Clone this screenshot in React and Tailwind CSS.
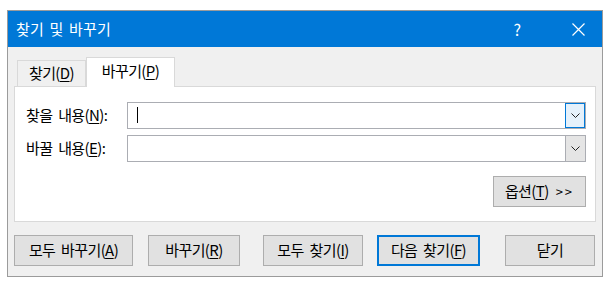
import React from "react";

const font = { fontFamily: '"Noto Sans CJK KR", "Noto Sans", sans-serif' };

// underlined mnemonic letter
const Key = ({ children }) => <span className="underline underline-offset-2">{children}</span>;

const Chevron = () => (
  <svg width="9" height="6" viewBox="0 0 9 6" fill="none">
    <path d="M0.5 0.5 L4.5 4.5 L8.5 0.5" stroke="#222" strokeWidth="1" />
  </svg>
);

const ComboInput = ({ focused, cursor }) => (
  <div className="flex h-[27px] flex-1 border border-[#abadb3] bg-white">
    <div className="relative flex-1">
      {cursor && <div className="absolute left-[9px] top-[4px] h-[16px] w-px bg-black" />}
    </div>
    <div
      className={
        focused
          ? "flex w-[20px] items-center justify-center border border-[#0078d7] bg-[#e5f1fb]"
          : "flex w-[20px] items-center justify-center border-l border-[#abadb3] bg-[#e5e5e5]"
      }
    >
      <Chevron />
    </div>
  </div>
);

const Btn = ({ children, className = "", primary }) => (
  <button
    className={
      "flex h-[31px] items-center justify-center bg-[#e1e1e1] text-[15px] tracking-[-0.6px] [word-spacing:3px] text-black " +
      (primary ? "border-2 border-[#0078d7] " : "border border-[#adadad] ") +
      className
    }
  >
    {children}
  </button>
);

export default function App() {
  return (
    <div className="h-[281px] w-[609px] bg-white pl-[7px] pt-[10px]" style={font}>
      <div className="flex h-[267px] w-[596px] flex-col border border-[#9b9b9b] bg-[#f0f0f0]">
        {/* Title bar */}
        <div className="flex h-[36px] items-center bg-[#0078d7] pl-[8px] text-white">
          <span className="text-[15px] tracking-[0.2px] [word-spacing:2px]">찾기 및 바꾸기</span>
          <span className="ml-auto mr-[51px] text-[16px]">?</span>
          <svg className="mr-[17px]" width="13" height="13" viewBox="0 0 13 13">
            <path d="M0.5 0.5 L12.5 12.5 M12.5 0.5 L0.5 12.5" stroke="#fff" strokeWidth="1.2" />
          </svg>
        </div>

        <div className="flex flex-1 flex-col px-[6px]">
          {/* Tabs */}
          <div className="mt-[10px] flex items-end pl-[3px]">
            <div className="flex h-[26px] w-[69px] items-center justify-center border border-b-0 border-[#d9d9d9] bg-[#f0f0f0] text-[15px] tracking-[-0.6px] text-black">
              찾기(<Key>D</Key>)
            </div>
            <div className="relative z-10 -mb-px flex h-[30px] w-[89px] items-start justify-center border border-b-0 border-[#d9d9d9] bg-white pt-[2px] text-[15px] tracking-[-0.6px] text-black">
              바꾸기(<Key>P</Key>)
            </div>
          </div>

          {/* Panel */}
          <div className="flex h-[136px] flex-col border border-[#d9d9d9] bg-white pl-[11px] pr-[9px] pt-[15px] text-[15px] tracking-[-0.6px] [word-spacing:3px]">
            <div className="flex items-center">
              <div className="w-[101px] text-black">
                찾을 내용(<Key>N</Key>):
              </div>
              <ComboInput focused cursor />
            </div>
            <div className="mt-[6px] flex items-center">
              <div className="w-[101px] text-black">
                바꿀 내용(<Key>E</Key>):
              </div>
              <ComboInput />
            </div>
            <div className="mt-[14px] flex justify-end">
              <Btn className="w-[93px] gap-[7px]">
                <span>
                  옵션(<Key>T</Key>)
                </span>
                <span className="text-[13px] tracking-[2px]">&gt;&gt;</span>
              </Btn>
            </div>
          </div>

          {/* Buttons */}
          <div className="mt-[13px] flex">
            <Btn className="w-[119px]">
              모두 바꾸기(<Key>A</Key>)
            </Btn>
            <Btn className="ml-[15px] w-[92px]">
              바꾸기(<Key>R</Key>)
            </Btn>
            <Btn className="ml-[23px] w-[100px]">
              모두 찾기(<Key>I</Key>)
            </Btn>
            <Btn primary className="ml-[14px] w-[103px]">
              다음 찾기(<Key>F</Key>)
            </Btn>
            <Btn className="ml-[25px] w-[90px]">닫기</Btn>
          </div>
        </div>
      </div>
    </div>
  );
}
